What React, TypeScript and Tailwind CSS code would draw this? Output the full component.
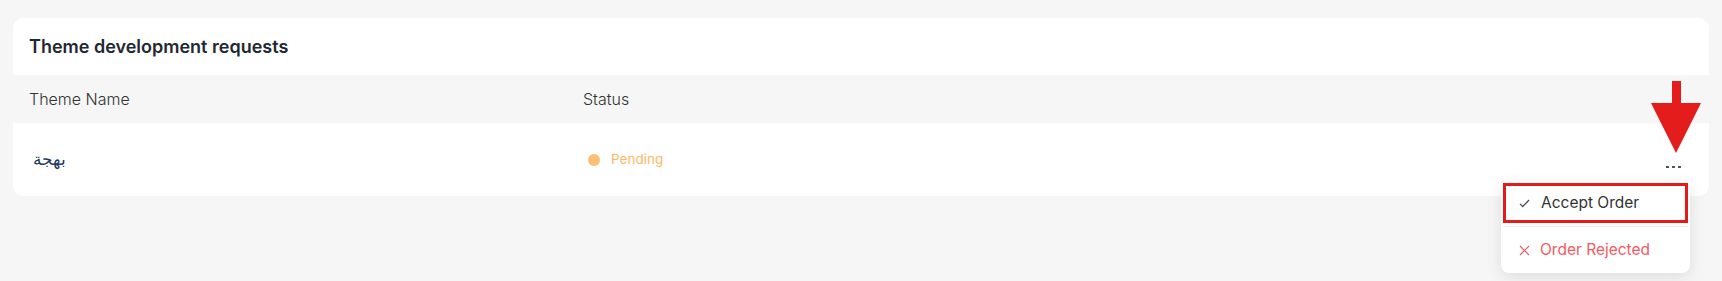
import React from "react";

export default function App() {
  return (
    <div
      className="relative min-h-[281px] w-full bg-[#f6f6f6] px-[13px] pt-[18px]"
      style={{ fontFamily: "Inter, 'DejaVu Sans', sans-serif" }}
    >
      <div className="overflow-hidden rounded-[10px] bg-white">
        <div className="flex h-[57px] items-center px-4">
          <h2 className="text-[18px] font-semibold text-[#222831]">Theme development requests</h2>
        </div>
        <div className="flex h-[48px] items-center bg-[#f6f6f6] px-4 text-[16px] font-light text-[#333]">
          <div className="w-[554px]">Theme Name</div>
          <div>Status</div>
        </div>
        <div className="flex h-[73px] items-center px-4">
          <div
            className="w-[554px] pl-1 text-[17px] font-light text-[#1e3a5f]"
            style={{ fontFamily: "'DejaVu Sans', sans-serif" }}
          >
            بهجة
          </div>
          <div className="ml-[5px] flex items-center gap-[11px]">
            <span className="h-3 w-3 rounded-full bg-[#ffbf72]" />
            <span className="text-[13.5px] text-[#ffb866]">Pending</span>
          </div>
          <div className="ml-auto mr-3 flex items-center gap-[3px] pt-[14px]">
            <span className="h-[2px] w-[3px] bg-[#4b5563]" />
            <span className="h-[2px] w-[3px] bg-[#4b5563]" />
            <span className="h-[2px] w-[3px] bg-[#4b5563]" />
          </div>
        </div>
      </div>

      {/* Red annotation arrow */}
      <svg
        className="absolute left-[1651px] top-[81px]"
        width="50"
        height="73"
        viewBox="0 0 50 73"
      >
        <rect x="21" y="0" width="9" height="23" fill="#e41c1c" />
        <polygon points="0,22 50,22 25,72" fill="#e41c1c" />
      </svg>

      {/* Dropdown menu */}
      <div className="absolute left-[1501px] top-[182px] w-[189px] rounded-[8px] bg-white shadow-[0_4px_16px_rgba(0,0,0,0.10)]">
        <div className="mx-[2px] mt-[1px] flex h-[40px] items-center gap-[11px] border-[3px] border-[#e31b1b] pl-[13px] text-[15.5px] text-[#333]">
          <svg width="11" height="9" viewBox="0 0 11 9" fill="none">
            <path d="M1 4.8 L3.8 7.6 L10 1" stroke="#444" strokeWidth="1.2" />
          </svg>
          <span>Accept Order</span>
        </div>
        <div className="mx-[2px] mt-[3px] border-t border-[#ececec]" />
        <div className="flex h-[46px] items-center gap-[10px] pl-[18px] text-[15.5px] text-[#f25a62]">
          <svg width="11" height="11" viewBox="0 0 11 11" fill="none">
            <path d="M1 1 L10 10 M10 1 L1 10" stroke="#f25a62" strokeWidth="1.2" />
          </svg>
          <span>Order Rejected</span>
        </div>
      </div>
    </div>
  );
}
